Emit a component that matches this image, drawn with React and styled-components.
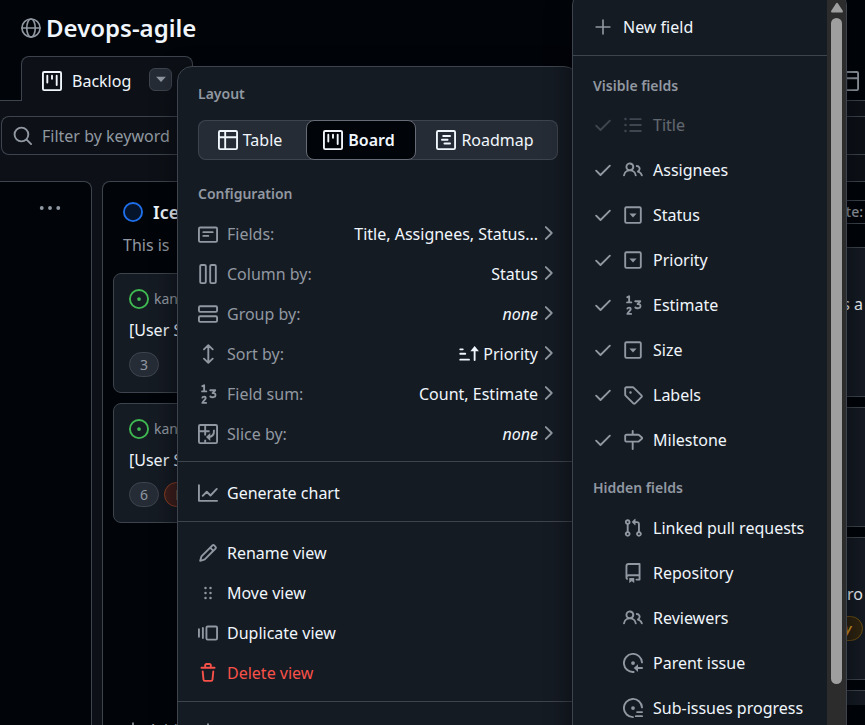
import React from "react";
import styled, { createGlobalStyle, css } from "styled-components";

const color = {
  text: "#f0f6fc",
  muted: "#9198a1",
  border: "#3d444d",
  canvas: "#0d1117",
  inset: "#010409",
  overlay: "#151b23",
  control: "#262c36",
  danger: "#f85149",
};

const GlobalStyle = createGlobalStyle`
  *, *::before, *::after { box-sizing: border-box; }
  body {
    margin: 0;
    background: ${color.inset};
    color: ${color.text};
    font: 16px/24px "Noto Sans", "Open Sans", sans-serif;
    overflow: hidden;
  }
  button, input { font: inherit; color: inherit; }
  h1, h2, h3, p, ul { margin: 0; padding: 0; }
`;

/* ---------- icons ---------- */

const IconSvg = styled.svg`
  display: block;
  flex: none;
  width: ${(p) => p.$size || 20}px;
  height: ${(p) => p.$size || 20}px;
  color: ${(p) => p.$color || "inherit"};
  fill: none;
  stroke: currentColor;
  stroke-width: 1.5;
  stroke-linecap: round;
  stroke-linejoin: round;
  .solid { fill: currentColor; stroke: none; }
`;

const frame = <rect x="0.75" y="0.75" width="14.5" height="14.5" rx="1" />;

const glyphs = {
  globe: (
    <g strokeWidth="1.3">
      <circle cx="8" cy="8" r="7.25" />
      <ellipse cx="8" cy="8" rx="3.4" ry="7.25" />
      <path d="M.75 8h14.5" />
    </g>
  ),
  project: <>{frame}<path d="M4.25 3.75v5.5M8 3.75v2.5M11.75 3.75v7.5" /></>,
  search: <><circle cx="6.75" cy="6.75" r="5.5" /><path d="M10.9 10.9l3.6 3.6" /></>,
  issue: <><circle cx="8" cy="8" r="7.25" /><circle className="solid" cx="8" cy="8" r="1.5" /></>,
  ring: <circle cx="8" cy="8" r="7.25" fill="#1f6feb26" />,
  table: <>{frame}<path d="M.75 5.75h14.5M5.75 .75v14.5" strokeLinecap="butt" /></>,
  roadmap: <>{frame}<path d="M5.75 4.75h5.5M4.75 7.75h4.5M6.75 10.75h4.5" /></>,
  note: <><rect x="0.75" y="2.75" width="14.5" height="11.5" rx="1" /><path d="M4.25 6.5h7.5M4.25 9.5h4" /></>,
  columns: <><rect x="1.75" y="0.75" width="4.5" height="14.5" rx="1" /><rect x="9.75" y="0.75" width="4.5" height="14.5" rx="1" /></>,
  rows: <><rect x="0.75" y="1.75" width="14.5" height="4.5" rx="1" /><rect x="0.75" y="9.75" width="14.5" height="4.5" rx="1" /></>,
  updown: <path d="M8.25 1v14M4.75 4.25 8.25 .9l3.5 3.35M4.75 11.75l3.5 3.35 3.5-3.35" />,
  number: <path d="M3.5 1.75 4.9 1v4.75M3.25 5.9h3.4M3.5 10.9c.2-1 2.7-1.3 2.7.3 0 1.2-1.5 1.8-2.7 3.9h3M9.8 5h4l-2.1 2.3c1.5-.2 2.3.6 2.3 1.6 0 1.7-2.9 2.3-4.1 1.1" />,
  slice: <>{frame}<path d="M.75 5.75h8.5M5.75 .75v8.5M5.75 12.5v2.5" strokeLinecap="butt" /><path d="M12.75 5.25c.2 3-1 5-4.5 5.25" /><path className="solid" d="M9.8 7.2v6.4L6.4 10.4z" /></>,
  sort: <><path d="M1 4.25h2M1 7.75h4M1 12.5h7" /><path d="M12.5 12.75V4" /><path className="solid" d="M12.5 1.5l3.4 4.2H9.1z" /></>,
  chevron: <path d="M6.25 3.25 11 8l-4.75 4.75" />,
  graph: <path d="M.75 1.75v12.5h14.5M3.75 10.25 7 7l3 3 5-5.25" />,
  pencil: <path className="solid" d="M11.013 1.427a1.75 1.75 0 0 1 2.474 0l1.086 1.086a1.75 1.75 0 0 1 0 2.474l-8.61 8.61c-.21.21-.47.364-.756.445l-3.251.93a.75.75 0 0 1-.927-.928l.929-3.25c.081-.286.235-.547.445-.758l8.61-8.61Zm.176 4.823L9.75 4.81l-6.286 6.287a.253.253 0 0 0-.064.108l-.558 1.953 1.953-.558a.253.253 0 0 0 .108-.064Zm1.238-3.763a.25.25 0 0 0-.354 0L10.811 3.75l1.439 1.44 1.263-1.263a.25.25 0 0 0 0-.354Z" />,
  grabber: <g className="solid">{[4, 8, 12].map((y) => <React.Fragment key={y}><circle cx="6" cy={y} r="1" /><circle cx="10" cy={y} r="1" /></React.Fragment>)}</g>,
  duplicate: <><rect x="6.75" y="2.75" width="8.5" height="10.5" rx="1" /><path d="M3.9 4v8M.75 5v6" /></>,
  trash: <path className="solid" d="M11 1.75V3h2.25a.75.75 0 0 1 0 1.5H2.75a.75.75 0 0 1 0-1.5H5V1.75C5 .784 5.784 0 6.75 0h2.5C10.216 0 11 .784 11 1.75ZM4.496 6.675l.66 6.6a.25.25 0 0 0 .249.225h5.19a.25.25 0 0 0 .249-.225l.66-6.6a.75.75 0 0 1 1.492.149l-.66 6.6A1.748 1.748 0 0 1 10.595 15h-5.19a1.75 1.75 0 0 1-1.741-1.575l-.66-6.6a.75.75 0 1 1 1.492-.15ZM6.5 1.75V3h3V1.75a.25.25 0 0 0-.25-.25h-2.5a.25.25 0 0 0-.25.25Z" />,
  download: <path d="M8 1v9M4.5 6.75 8 10.25l3.5-3.5M2 14.25h12" />,
  plus: <path d="M8 2.5v11M2.5 8h11" strokeWidth="1.3" />,
  check: <path d="M2.5 8.5 6 12l7.5-7.5" />,
  list: <><path d="M5.75 3.25h8.5M5.75 8h8.5M5.75 12.75h8.5" /><g className="solid"><circle cx="2" cy="3.25" r="1" /><circle cx="2" cy="8" r="1" /><circle cx="2" cy="12.75" r="1" /></g></>,
  people: <path className="solid" d="M2 5.5a3.5 3.5 0 1 1 5.898 2.549 5.508 5.508 0 0 1 3.034 4.084.75.75 0 1 1-1.482.235 4 4 0 0 0-7.9 0 .75.75 0 0 1-1.482-.236A5.507 5.507 0 0 1 3.102 8.05 3.493 3.493 0 0 1 2 5.5ZM11 4a3.001 3.001 0 0 1 2.22 5.018 5.01 5.01 0 0 1 2.56 3.012.749.749 0 0 1-.885.954.752.752 0 0 1-.549-.514 3.507 3.507 0 0 0-2.522-2.372.75.75 0 0 1-.574-.73v-.352a.75.75 0 0 1 .416-.672A1.5 1.5 0 0 0 11 5.5.75.75 0 0 1 11 4Zm-5.5-.5a2 2 0 1 0-.001 3.999A2 2 0 0 0 5.5 3.5Z" />,
  select: <><rect x="1.75" y="1.75" width="12.5" height="12.5" rx="1" /><path className="solid" d="M5.1 6.75h5.8L8 9.9z" /></>,
  tag: <path className="solid" d="M1 7.775V2.75C1 1.784 1.784 1 2.75 1h5.025c.464 0 .91.184 1.238.513l6.25 6.25a1.75 1.75 0 0 1 0 2.474l-5.026 5.026a1.75 1.75 0 0 1-2.474 0l-6.25-6.25A1.752 1.752 0 0 1 1 7.775Zm1.5 0c0 .066.026.13.073.177l6.25 6.25a.25.25 0 0 0 .354 0l5.025-5.025a.25.25 0 0 0 0-.354l-6.25-6.25a.25.25 0 0 0-.177-.073H2.75a.25.25 0 0 0-.25.25ZM6 5a1 1 0 1 1 0 2 1 1 0 0 1 0-2Z" />,
  milestone: <path className="solid" d="M7.75 0a.75.75 0 0 1 .75.75V3h3.634c.414 0 .814.147 1.13.414l2.07 1.75a1.75 1.75 0 0 1 0 2.672l-2.07 1.75a1.75 1.75 0 0 1-1.13.414H8.5v5.25a.75.75 0 0 1-1.5 0V10H2.75A1.75 1.75 0 0 1 1 8.25v-3.5C1 3.784 1.784 3 2.75 3H7V.75A.75.75 0 0 1 7.75 0Zm4.384 8.5a.25.25 0 0 0 .161-.06l2.07-1.75a.248.248 0 0 0 0-.38l-2.07-1.75a.25.25 0 0 0-.161-.06H2.75a.25.25 0 0 0-.25.25v3.5c0 .138.112.25.25.25h9.384Z" />,
  pull: <path className="solid" d="M1.5 3.25a2.25 2.25 0 1 1 3 2.122v5.256a2.251 2.251 0 1 1-1.5 0V5.372A2.25 2.25 0 0 1 1.5 3.25Zm5.677-.177L9.573.677A.25.25 0 0 1 10 .854V2.5h1A2.5 2.5 0 0 1 13.5 5v5.628a2.251 2.251 0 1 1-1.5 0V5a1 1 0 0 0-1-1h-1v1.646a.25.25 0 0 1-.427.177L7.177 3.427a.25.25 0 0 1 0-.354ZM3.75 2.5a.75.75 0 1 0 0 1.5.75.75 0 0 0 0-1.5Zm0 9.5a.75.75 0 1 0 0 1.5.75.75 0 0 0 0-1.5Zm8.25.75a.75.75 0 1 0 1.5 0 .75.75 0 0 0-1.5 0Z" />,
  repo: <path className="solid" d="M2 2.5A2.5 2.5 0 0 1 4.5 0h8.75a.75.75 0 0 1 .75.75v12.5a.75.75 0 0 1-.75.75h-2.5a.75.75 0 0 1 0-1.5h1.75v-2h-8a1 1 0 0 0-.714 1.7.75.75 0 1 1-1.072 1.05A2.495 2.495 0 0 1 2 11.5Zm10.5-1h-8a1 1 0 0 0-1 1v6.708A2.486 2.486 0 0 1 4.5 9h8ZM5 12.25a.25.25 0 0 1 .25-.25h3.5a.25.25 0 0 1 .25.25v3.25a.25.25 0 0 1-.4.2l-1.45-1.087a.249.249 0 0 0-.3 0L5.4 15.7a.25.25 0 0 1-.4-.2Z" />,
  parent: <><path d="M15.2 7.5A7.25 7.25 0 1 0 8.5 15.2" /><circle className="solid" cx="8" cy="8" r="1.5" /><path d="M11 12h4.25" /><path className="solid" d="M12 8.9v6.2L8.6 12z" /></>,
  progress: <><path d="M15.2 7.5A7.25 7.25 0 1 0 8 15.25" /><circle className="solid" cx="8" cy="8" r="1.5" /><path d="M11.25 11.25h4M10.25 14.5h5" /></>,
  kebab: <g className="solid"><circle cx="2" cy="8" r="1.4" /><circle cx="8" cy="8" r="1.4" /><circle cx="14" cy="8" r="1.4" /></g>,
  caret: <path className="solid" d="M3.6 6h8.8L8 10.6z" />,
};

const Icon = ({ name, size, tint }) => (
  <IconSvg viewBox="0 0 16 16" aria-hidden="true" $size={size} $color={tint}>
    {glyphs[name]}
  </IconSvg>
);

/* ---------- project page ---------- */

const Page = styled.div`
  position: relative;
  display: flex;
  flex-direction: column;
  height: 100vh;
  min-width: 0;
  overflow: hidden;
  background: ${color.canvas};
`;

const Header = styled.header`
  display: flex;
  align-items: center;
  gap: 5px;
  height: 56px;
  flex: none;
  padding: 0 21px;
  background: ${color.inset};
`;

const ProjectTitle = styled.h1`
  font-size: 24px;
  line-height: 32px;
  font-weight: 600;
`;

const TabBar = styled.nav`
  display: flex;
  align-items: flex-end;
  justify-content: space-between;
  height: 45px;
  flex: none;
  padding: 0 6px 0 21px;
  background: linear-gradient(${color.border}, ${color.border}) bottom / 100% 1px no-repeat ${color.inset};
`;

const Tab = styled.div`
  display: flex;
  align-items: center;
  gap: 18px;
  height: 45px;
  padding: 0 20px;
  background: ${color.canvas};
  border: 1px solid ${color.border};
  border-bottom: 0;
  border-radius: 8px 8px 0 0;
`;

const TabLink = styled.a`
  display: flex;
  align-items: center;
  gap: 10px;
  height: 45px;
  padding-top: 4px;
  color: ${(p) => (p.$quiet ? color.muted : color.text)};
  text-decoration: none;
`;

const CaretButton = styled.button`
  display: grid;
  place-items: center;
  width: 23px;
  height: 23px;
  padding: 0;
  background: ${color.control};
  border: 1px solid ${color.border};
  border-radius: 6px;
  color: ${color.muted};
`;

const FilterBox = styled.label`
  display: flex;
  align-items: center;
  gap: 9px;
  height: 39px;
  flex: none;
  margin: 15px 0 26px 1px;
  padding: 0 11px;
  border: 1px solid ${color.border};
  border-right: 0;
  border-radius: 8px 0 0 8px;
  color: ${color.muted};
`;

const FilterInput = styled.input`
  flex: 1;
  min-width: 0;
  padding: 0;
  border: 0;
  outline: 0;
  background: none;
  &::placeholder { color: ${color.muted}; opacity: 1; }
`;

const Board = styled.main`
  display: grid;
  grid-template-columns: 92px 438px 1fr;
  gap: 10px;
  flex: 1;
  min-height: 0;
`;

const Column = styled.section`
  display: flex;
  flex-direction: column;
  min-width: 0;
  overflow: hidden;
  padding: 0 10px;
  background: ${color.inset};
  border: 1px solid ${color.border};
  border-bottom: 0;
  ${(p) => p.$open === "left" && css`border-left: 0; border-radius: 0 8px 0 0;`}
  ${(p) => p.$open === "right" && css`border-right: 0; border-radius: 8px 0 0 0; padding-right: 0;`}
  ${(p) => !p.$open && css`border-radius: 8px 8px 0 0;`}
`;

const ColumnMenu = styled.button`
  align-self: flex-end;
  margin: 15px 20px 0 0;
  padding: 0;
  border: 0;
  background: none;
  color: ${color.muted};
`;

const ColumnHead = styled.div`
  display: flex;
  align-items: center;
  justify-content: ${(p) => (p.$end ? "flex-end" : "flex-start")};
  gap: 10px;
  height: 30px;
  flex: none;
  margin: 15px 0 0 10px;
`;

const ColumnName = styled.h2`
  font-size: 18px;
  line-height: 24px;
  font-weight: 600;
`;

const ColumnNote = styled.p`
  margin: 6px 0 16px 10px;
  color: ${color.muted};
`;

const Counter = styled.span`
  padding: 0 2px 0 8px;
  font-size: 14px;
  line-height: 22px;
  font-weight: 500;
  color: ${color.muted};
  border: 1px solid ${color.border};
  border-right: 0;
  border-radius: 12px 0 0 12px;
`;

const CardList = styled.div`
  display: flex;
  flex-direction: column;
  gap: 10px;
  flex: 1;
  min-height: 0;
  overflow: hidden;
  padding-top: ${(p) => p.$top || 0}px;
`;

const Card = styled.article`
  flex: none;
  height: ${(p) => p.$height}px;
  padding: 15px;
  background: ${color.overlay};
  border: 1px solid ${color.border};
  border-radius: 8px;
  ${(p) => p.$open && css`
    padding-right: 2px;
    border-right: 0;
    border-radius: 8px 0 0 8px;
    text-align: right;
  `}
`;

const CardRepo = styled.div`
  display: flex;
  align-items: center;
  gap: 5px;
  height: 20px;
  font-size: 14px;
  line-height: 20px;
  color: ${color.muted};
`;

const CardTitle = styled.h3`
  margin: 9px 0 10px;
  min-height: 24px;
  font-size: 16px;
  line-height: 24px;
  font-weight: 400;
  white-space: nowrap;
`;

const Pills = styled.div`
  display: flex;
  justify-content: ${(p) => (p.$end ? "flex-end" : "flex-start")};
  gap: 5px;
`;

const Pill = styled.span`
  min-width: 30px;
  height: 25px;
  padding: 0 10px;
  font-size: 14px;
  line-height: 23px;
  text-align: center;
  border: 1px solid;
  border-radius: 13px;
  ${(p) => ({
    plain: css`color: ${color.muted}; background: ${color.control}; border-color: ${color.border};`,
    red: css`color: #f0883e; background: #3d1f1c; border-color: #8a3f24;`,
    amber: css`color: #d29922; background: #2e2410; border-color: #6b4f14; font-weight: 600; font-style: italic;`,
  }[p.$tone || "plain"])}
`;

const AddItem = styled.button`
  display: flex;
  align-items: center;
  gap: 5px;
  height: 50px;
  padding: 0 10px;
  margin-bottom: -30px;
  flex: none;
  border: 0;
  background: none;
  color: ${color.muted};
`;

const ColumnFoot = styled.div`
  flex: none;
  height: 20px;
`;

/* ---------- view options menu ---------- */

const popover = css`
  position: absolute;
  background: ${color.overlay};
  border: 1px solid ${color.border};
  border-radius: 15px;
  box-shadow: 0 8px 24px #01040999;
`;

const ViewMenu = styled.div`
  ${popover}
  top: 66px;
  left: 177px;
  width: 402px;
`;

const MenuGroup = styled.div`
  padding: ${(p) => (p.$first ? "15px 20px 7px" : "11px 20px 8px")};
  & + & { border-top: 1px solid ${color.border}; }
`;

const GroupLabel = styled.h2`
  font-size: 14px;
  line-height: 24px;
  font-weight: 600;
  color: ${color.muted};
`;

const Segments = styled.div`
  display: grid;
  grid-template-columns: 108fr 110fr 142fr;
  height: 40px;
  margin: 14px 0 22px;
  background: ${color.control};
  border-radius: 8px;
  box-shadow: inset 0 0 0 1px ${color.border};
`;

const Segment = styled.button`
  display: flex;
  align-items: center;
  justify-content: center;
  gap: 5px;
  padding: 0 4px 0 0;
  border: 1px solid transparent;
  border-radius: 8px;
  background: none;
  ${(p) => p.$active && css`
    background: ${color.inset};
    border-color: #656c76;
    font-weight: 600;
  `}
`;

const ConfigRows = styled.div`
  margin-top: 8px;
`;

const MenuRow = styled.button`
  display: flex;
  align-items: center;
  gap: 9px;
  width: 100%;
  height: 40px;
  padding: 0;
  border: 0;
  background: none;
  text-align: left;
  white-space: nowrap;
  ${(p) => p.$danger && css`color: ${color.danger};`}
`;

const RowLabel = styled.span`
  flex: 1;
  color: ${color.muted};
`;

const RowValue = styled.span`
  display: flex;
  align-items: center;
  gap: 4px;
  font-style: ${(p) => (p.$empty ? "italic" : "normal")};
`;

const RowChevron = styled.span`
  margin: 0 0 3px -9px;
`;

/* ---------- fields menu ---------- */

const FieldsMenu = styled.div`
  ${popover}
  display: flex;
  top: -10px;
  bottom: -20px;
  left: 572px;
  width: 275px;
  overflow: hidden;
`;

const FieldsBody = styled.div`
  flex: 1;
  min-width: 0;
  overflow: hidden;
  white-space: nowrap;
`;

const NewField = styled.button`
  display: flex;
  align-items: center;
  gap: 10px;
  width: 100%;
  height: 65px;
  padding: 8px 20px 0;
  border: 0;
  border-bottom: 1px solid ${color.border};
  background: none;
`;

const FieldsLabel = styled(GroupLabel)`
  padding: ${(p) => (p.$second ? "14px 20px 5px" : "18px 20px 4px")};
`;

const FieldRow = styled.label`
  display: flex;
  align-items: center;
  gap: 10px;
  height: 45px;
  padding: 0 20px;
  opacity: ${(p) => (p.$disabled ? 0.35 : 1)};
`;

const FieldCheck = styled.input`
  position: absolute;
  width: 20px;
  height: 20px;
  margin: 0;
  opacity: 0;
`;

const CheckSlot = styled.span`
  width: 20px;
  height: 20px;
`;

const ScrollTrack = styled.div`
  display: flex;
  flex-direction: column;
  align-items: center;
  gap: 5px;
  width: 19px;
  padding: 11px 0 60px;
  background: #2c2c2c;
`;

const ScrollThumb = styled.div`
  flex: 1;
  width: 11px;
  background: #9f9f9f;
  border-radius: 6px;
`;

const ArrowUp = styled.svg`
  flex: none;
  width: 12px;
  height: 11px;
  fill: #9f9f9f;
`;

const config = [
  { icon: "note", label: "Fields:", value: "Title, Assignees, Status..." },
  { icon: "columns", label: "Column by:", value: "Status" },
  { icon: "rows", label: "Group by:", value: "none", empty: true },
  { icon: "updown", label: "Sort by:", value: "Priority", mark: "sort" },
  { icon: "number", label: "Field sum:", value: "Count, Estimate" },
  { icon: "slice", label: "Slice by:", value: "none", empty: true },
];

const visibleFields = [
  ["list", "Title", true],
  ["people", "Assignees"],
  ["select", "Status"],
  ["select", "Priority"],
  ["number", "Estimate"],
  ["select", "Size"],
  ["tag", "Labels"],
  ["milestone", "Milestone"],
];

const hiddenFields = [
  ["pull", "Linked pull requests"],
  ["repo", "Repository"],
  ["people", "Reviewers"],
  ["parent", "Parent issue"],
  ["progress", "Sub-issues progress"],
];

const Field = ({ icon, name, checked, disabled }) => (
  <FieldRow $disabled={disabled}>
    <FieldCheck type="checkbox" defaultChecked={checked} disabled={disabled} />
    <CheckSlot>{checked && <Icon name="check" tint={color.muted} />}</CheckSlot>
    <Icon name={icon} tint={color.muted} />
    {name}
  </FieldRow>
);

export default function App() {
  return (
    <>
      <GlobalStyle />
      <Page>
        <Header>
          <Icon name="globe" tint={color.muted} />
          <ProjectTitle>Devops-agile</ProjectTitle>
        </Header>

        <TabBar aria-label="Views">
          <Tab>
            <TabLink href="#backlog">
              <Icon name="project" />
              Backlog
            </TabLink>
            <CaretButton aria-label="View options">
              <Icon name="caret" size={18} />
            </CaretButton>
          </Tab>
          <TabLink href="#table" aria-label="Table view" $quiet>
            <Icon name="table" />
          </TabLink>
        </TabBar>

        <FilterBox>
          <Icon name="search" />
          <FilterInput type="text" aria-label="Filter" placeholder="Filter by keyword" />
        </FilterBox>

        <Board>
          <Column $open="left">
            <ColumnMenu aria-label="Column options">
              <Icon name="kebab" size={22} />
            </ColumnMenu>
          </Column>

          <Column>
            <ColumnHead>
              <Icon name="ring" tint="#1f6feb" />
              <ColumnName>Ice</ColumnName>
            </ColumnHead>
            <ColumnNote>This is</ColumnNote>
            <CardList>
              {[["3"], ["6", "L"]].map(([count, tag]) => (
                <Card key={count} $height={120}>
                  <CardRepo>
                    <Icon name="issue" tint="#3fb950" />
                    kan
                  </CardRepo>
                  <CardTitle>[User S</CardTitle>
                  <Pills>
                    <Pill>{count}</Pill>
                    {tag && <Pill $tone="red">{tag}</Pill>}
                  </Pills>
                </Card>
              ))}
            </CardList>
            <AddItem>
              <Icon name="plus" />
              Add item
            </AddItem>
          </Column>

          <Column $open="right">
            <ColumnHead $end>
              <Counter>te:</Counter>
            </ColumnHead>
            <CardList $top={20}>
              <Card $height={150} $open>
                <CardRepo />
                <CardTitle>s a</CardTitle>
              </Card>
              <Card $height={120} $open />
              <Card $height={143} $open>
                <CardRepo />
                <CardTitle>cro</CardTitle>
                <Pills $end>
                  <Pill $tone="amber">y</Pill>
                </Pills>
              </Card>
              <Card $height={80} $open />
            </CardList>
            <ColumnFoot />
          </Column>
        </Board>

        <ViewMenu>
          <MenuGroup $first>
            <GroupLabel>Layout</GroupLabel>
            <Segments>
              <Segment><Icon name="table" />Table</Segment>
              <Segment $active aria-pressed="true"><Icon name="project" />Board</Segment>
              <Segment><Icon name="roadmap" />Roadmap</Segment>
            </Segments>
            <GroupLabel>Configuration</GroupLabel>
            <ConfigRows>
              {config.map((row) => (
                <MenuRow key={row.label}>
                  <Icon name={row.icon} tint={color.muted} />
                  <RowLabel>{row.label}</RowLabel>
                  <RowValue $empty={row.empty}>
                    {row.mark && <Icon name={row.mark} />}
                    {row.value}
                  </RowValue>
                  <RowChevron><Icon name="chevron" tint={color.muted} /></RowChevron>
                </MenuRow>
              ))}
            </ConfigRows>
          </MenuGroup>
          <MenuGroup>
            <MenuRow><Icon name="graph" tint={color.muted} />Generate chart</MenuRow>
          </MenuGroup>
          <MenuGroup>
            <MenuRow><Icon name="pencil" tint={color.muted} />Rename view</MenuRow>
            <MenuRow><Icon name="grabber" tint={color.muted} />Move view</MenuRow>
            <MenuRow><Icon name="duplicate" tint={color.muted} />Duplicate view</MenuRow>
            <MenuRow $danger><Icon name="trash" />Delete view</MenuRow>
          </MenuGroup>
          <MenuGroup>
            <MenuRow aria-label="Export view"><Icon name="download" tint={color.muted} /></MenuRow>
          </MenuGroup>
        </ViewMenu>

        <FieldsMenu>
          <FieldsBody>
            <NewField><Icon name="plus" tint={color.muted} />New field</NewField>
            <FieldsLabel>Visible fields</FieldsLabel>
            {visibleFields.map(([icon, name, disabled]) => (
              <Field key={name} icon={icon} name={name} disabled={disabled} checked />
            ))}
            <FieldsLabel $second>Hidden fields</FieldsLabel>
            {hiddenFields.map(([icon, name]) => (
              <Field key={name} icon={icon} name={name} />
            ))}
          </FieldsBody>
          <ScrollTrack>
            <ArrowUp viewBox="0 0 12 11" aria-hidden="true">
              <path d="M5 1.5a1.2 1.2 0 0 1 2 0l4.6 7A1.2 1.2 0 0 1 10.5 10.5h-9A1.2 1.2 0 0 1 .4 8.5z" />
            </ArrowUp>
            <ScrollThumb />
          </ScrollTrack>
        </FieldsMenu>
      </Page>
    </>
  );
}
